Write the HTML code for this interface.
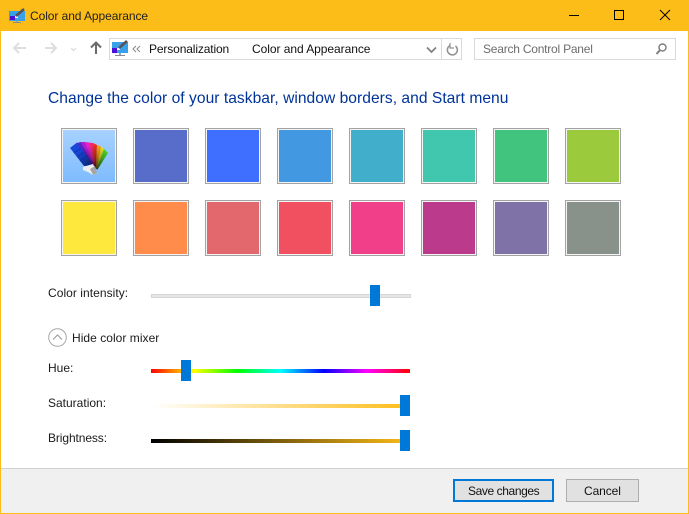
<!DOCTYPE html>
<html><head><meta charset="utf-8"><style>
html,body{margin:0;padding:0}
body{width:689px;height:514px;position:relative;overflow:hidden;background:#fff;font-family:"Liberation Sans",sans-serif;font-size:12px;color:#1a1a1a}
.a{position:absolute}
.t{position:absolute;white-space:nowrap;line-height:16px}
.s{position:absolute;width:54px;height:54px;border:1px solid #a3a3a3;box-sizing:content-box;box-shadow:inset 0 0 0 1px #f4f4f4}
.th{position:absolute;width:10px;height:21px;background:#0078d7}
</style></head><body>
<div class="a" style="left:0;top:0;width:689px;height:31px;background:#fdbd18"></div>
<div class="a" style="left:0;top:31px;width:1px;height:483px;background:#fdbd18"></div>
<div class="a" style="left:688px;top:31px;width:1px;height:483px;background:#fdbd18"></div>
<svg class="a" style="left:9px;top:8px" width="18" height="16" viewBox="0 0 18 16"><rect x="0" y="3" width="16" height="10" fill="#3aa0ea"/><rect x="1" y="8" width="5" height="4" fill="#4a10d8"/><rect x="6" y="8" width="3" height="2" fill="#eef"/><path d="M7 8L15 1" stroke="#555" stroke-width="2.5"/><rect x="4" y="14" width="8" height="1" fill="#8a8a8a"/><rect x="7" y="13" width="2" height="1" fill="#8ab"/></svg>
<div class="t" style="left:30px;top:8px;letter-spacing:-.07px;color:#222">Color and Appearance</div>
<svg class="a" style="left:560px;top:0" width="129" height="31"><path d="M9 15.5H19" stroke="#000"/><rect x="54.5" y="10.5" width="9" height="9" fill="none" stroke="#000"/><path d="M100 10L110 20M110 10L100 20" stroke="#000"/></svg>

<svg class="a" style="left:10px;top:38px" width="100" height="22" fill="none"><path d="M5 10H16M9 5L4 10L9 15" stroke="#dedede" stroke-width="2"/><path d="M35 10H45M41 5L46 10L41 15" stroke="#dedede" stroke-width="2"/><path d="M61 10L63.500 12.500L66 10" stroke="#dedede" stroke-width="1.300"/><path d="M86 16V5M81 9.500L86 4.500L91 9.500" stroke="#6a6a6a" stroke-width="2"/></svg>

<div class="a" style="left:109px;top:38px;width:353px;height:22px;border:1px solid #d9d9d9;box-sizing:border-box"></div>
<div class="a" style="left:441px;top:38px;width:1px;height:22px;background:#d9d9d9"></div>
<svg class="a" style="left:111px;top:39px" width="18" height="18" viewBox="0 0 18 18"><rect x="1" y="3" width="16" height="11" fill="#3aa0ea"/><rect x="1" y="9" width="5" height="5" fill="#4a10d8"/><rect x="6" y="9" width="3" height="2" fill="#eef"/><path d="M8 9L16 2" stroke="#555" stroke-width="2.500"/><rect x="4" y="16" width="10" height="1" fill="#8a8a8a"/><rect x="8" y="14" width="2" height="2" fill="#8ab"/></svg>
<svg class="a" style="left:132px;top:45px" width="10" height="9" fill="none" stroke="#888"><path d="M4 1L1 4L4 7M8 1L5 4L8 7"/></svg>
<div class="t" style="left:149px;top:41px;letter-spacing:-.13px;color:#111">Personalization</div>
<div class="t" style="left:252px;top:41px;letter-spacing:-.05px;color:#111">Color and Appearance</div>
<svg class="a" style="left:426px;top:46px" width="12" height="8" fill="none"><path d="M1 1.500L5.500 6L10 1.500" stroke="#808080" stroke-width="1.700"/></svg>
<svg class="a" style="left:445px;top:42px" width="15" height="15" fill="none"><path d="M10.500 4A5 5 0 1 1 5 3.500" stroke="#909090" stroke-width="1.500"/><path d="M5 1V6H9" stroke="#909090" stroke-width="1.200"/></svg>

<div class="a" style="left:474px;top:38px;width:202px;height:22px;border:1px solid #d9d9d9;box-sizing:border-box"></div>
<div class="t" style="left:483px;top:41px;letter-spacing:-.22px;color:#6d6d6d">Search Control Panel</div>
<svg class="a" style="left:655px;top:42px" width="13" height="14" fill="none"><circle cx="7.500" cy="5.500" r="3.500" stroke="#808080" stroke-width="1.500"/><path d="M5 8L1.500 12" stroke="#808080" stroke-width="2"/></svg>

<div class="t" style="left:48px;top:90px;font-size:15.6px;line-height:18px;letter-spacing:.03px;color:#003399">Change the color of your taskbar, window borders, and Start menu</div>

<div class="s" style="left:61px;top:128px;background:linear-gradient(#a8d2ff,#7dbbff)"></div>
<svg class="a" style="left:60px;top:128px" width="58" height="58" viewBox="0 0 58 58">
<defs><radialGradient id="d" gradientUnits="userSpaceOnUse" cx="35" cy="41" r="24"><stop offset="0" stop-color="#000" stop-opacity=".75"/><stop offset=".5" stop-color="#000" stop-opacity=".3"/><stop offset="1" stop-color="#000" stop-opacity="0"/></radialGradient></defs>
<path d="M10 20L17 14.500L36 38L24 38Z" fill="#1846d8"/>
<path d="M17 15L21 14L35 38L33 37Z" fill="#5a22c8"/>
<path d="M21 14L25 14L35 38L33 37Z" fill="#b01ed0"/>
<path d="M25 14L29 14.500L35 39L34 38Z" fill="#e81ec8"/>
<path d="M29 14.500L33 15L36 40L35 39Z" fill="#f02a70"/>
<path d="M33 15L37 17L36 41L35 39Z" fill="#ee3020"/>
<path d="M37 17L41 18.500L37 41L36 40Z" fill="#f5a810"/>
<path d="M41 18.500L44 21L37 41L36.500 41Z" fill="#f0e420"/>
<path d="M44 21L48 25L37.500 41.500L37 41Z" fill="#50dc28"/>
<path d="M10 20L17 14.500L21 14L25 14L29 14.500L33 15L37 17L41 18.500L44 21L48 25L37.500 41.500L36 41L33 36L24 38Z" fill="url(#d)"/>
<path d="M14 25L21 20M17 29L24 24M20 33L27 28" stroke="#0c2c90" stroke-width="1" fill="none" opacity=".6"/>
<path d="M23 39L33 36L37 45L33 47L28 44L23 42Z" fill="#eeeeee"/>
<path d="M30 41L35 38L37 45L33 47Z" fill="#a6a6a6"/>
</svg>
<div class="s" style="left:133px;top:128px;background:#576dc9"></div>
<div class="s" style="left:205px;top:128px;background:#3f6fff"></div>
<div class="s" style="left:277px;top:128px;background:#4398e2"></div>
<div class="s" style="left:349px;top:128px;background:#41afcb"></div>
<div class="s" style="left:421px;top:128px;background:#40c7ae"></div>
<div class="s" style="left:493px;top:128px;background:#40c47e"></div>
<div class="s" style="left:565px;top:128px;background:#9bcb3d"></div>
<div class="s" style="left:61px;top:200px;background:#ffe83e"></div>
<div class="s" style="left:133px;top:200px;background:#ff8c4b"></div>
<div class="s" style="left:205px;top:200px;background:#e3686d"></div>
<div class="s" style="left:277px;top:200px;background:#f0505f"></div>
<div class="s" style="left:349px;top:200px;background:#f23f8a"></div>
<div class="s" style="left:421px;top:200px;background:#bb3a8c"></div>
<div class="s" style="left:493px;top:200px;background:#7f72a6"></div>
<div class="s" style="left:565px;top:200px;background:#88928a"></div>

<div class="t" style="left:48px;top:285px;letter-spacing:.05px">Color intensity:</div>
<div class="a" style="left:151px;top:294px;width:260px;height:4px;background:#e6e6e6;border:1px solid #d6d6d6;box-sizing:border-box"></div>
<div class="th" style="left:370px;top:285px"></div>

<svg class="a" style="left:48px;top:328px" width="20" height="20" fill="none"><circle cx="9.500" cy="9.500" r="8.800" stroke="#a8a8a8"/><path d="M5 11.500L9.500 7L14 11.500" stroke="#a0a0a0" stroke-width="1.200"/></svg>
<div class="t" style="left:72px;top:330px;letter-spacing:.04px">Hide color mixer</div>

<div class="t" style="left:48px;top:360px">Hue:</div>
<div class="a" style="left:151px;top:369px;width:259px;height:4px;background:linear-gradient(90deg,#f00,#ff0 16.67%,#0f0 33.33%,#0ff 50%,#00f 66.67%,#f0f 83.33%,#f00)"></div>
<div class="th" style="left:181px;top:360px"></div>

<div class="t" style="left:48px;top:395px">Saturation:</div>
<div class="a" style="left:151px;top:404px;width:259px;height:4px;background:linear-gradient(90deg,#fff,#fdbd18)"></div>
<div class="th" style="left:400px;top:395px"></div>

<div class="t" style="left:48px;top:430px;letter-spacing:-.1px">Brightness:</div>
<div class="a" style="left:151px;top:439px;width:259px;height:4px;background:linear-gradient(90deg,#000,#fdbd18)"></div>
<div class="th" style="left:400px;top:430px"></div>

<div class="a" style="left:1px;top:468px;width:687px;height:45px;background:#f0f0f0;border-top:1px solid #d0d0d0;box-sizing:border-box"></div>
<div class="a" style="left:0;top:513px;width:689px;height:1px;background:#fdbd18"></div>
<div class="a" style="left:453px;top:479px;width:101px;height:23px;background:#e1e1e1;border:2px solid #0078d7;box-sizing:border-box"></div>
<div class="t" style="left:468px;top:483px;letter-spacing:-.4px;color:#111">Save changes</div>
<div class="a" style="left:566px;top:479px;width:73px;height:23px;background:#e1e1e1;border:1px solid #adadad;box-sizing:border-box"></div>
<div class="t" style="left:584px;top:483px;letter-spacing:-.1px;color:#111">Cancel</div>
</body></html>
